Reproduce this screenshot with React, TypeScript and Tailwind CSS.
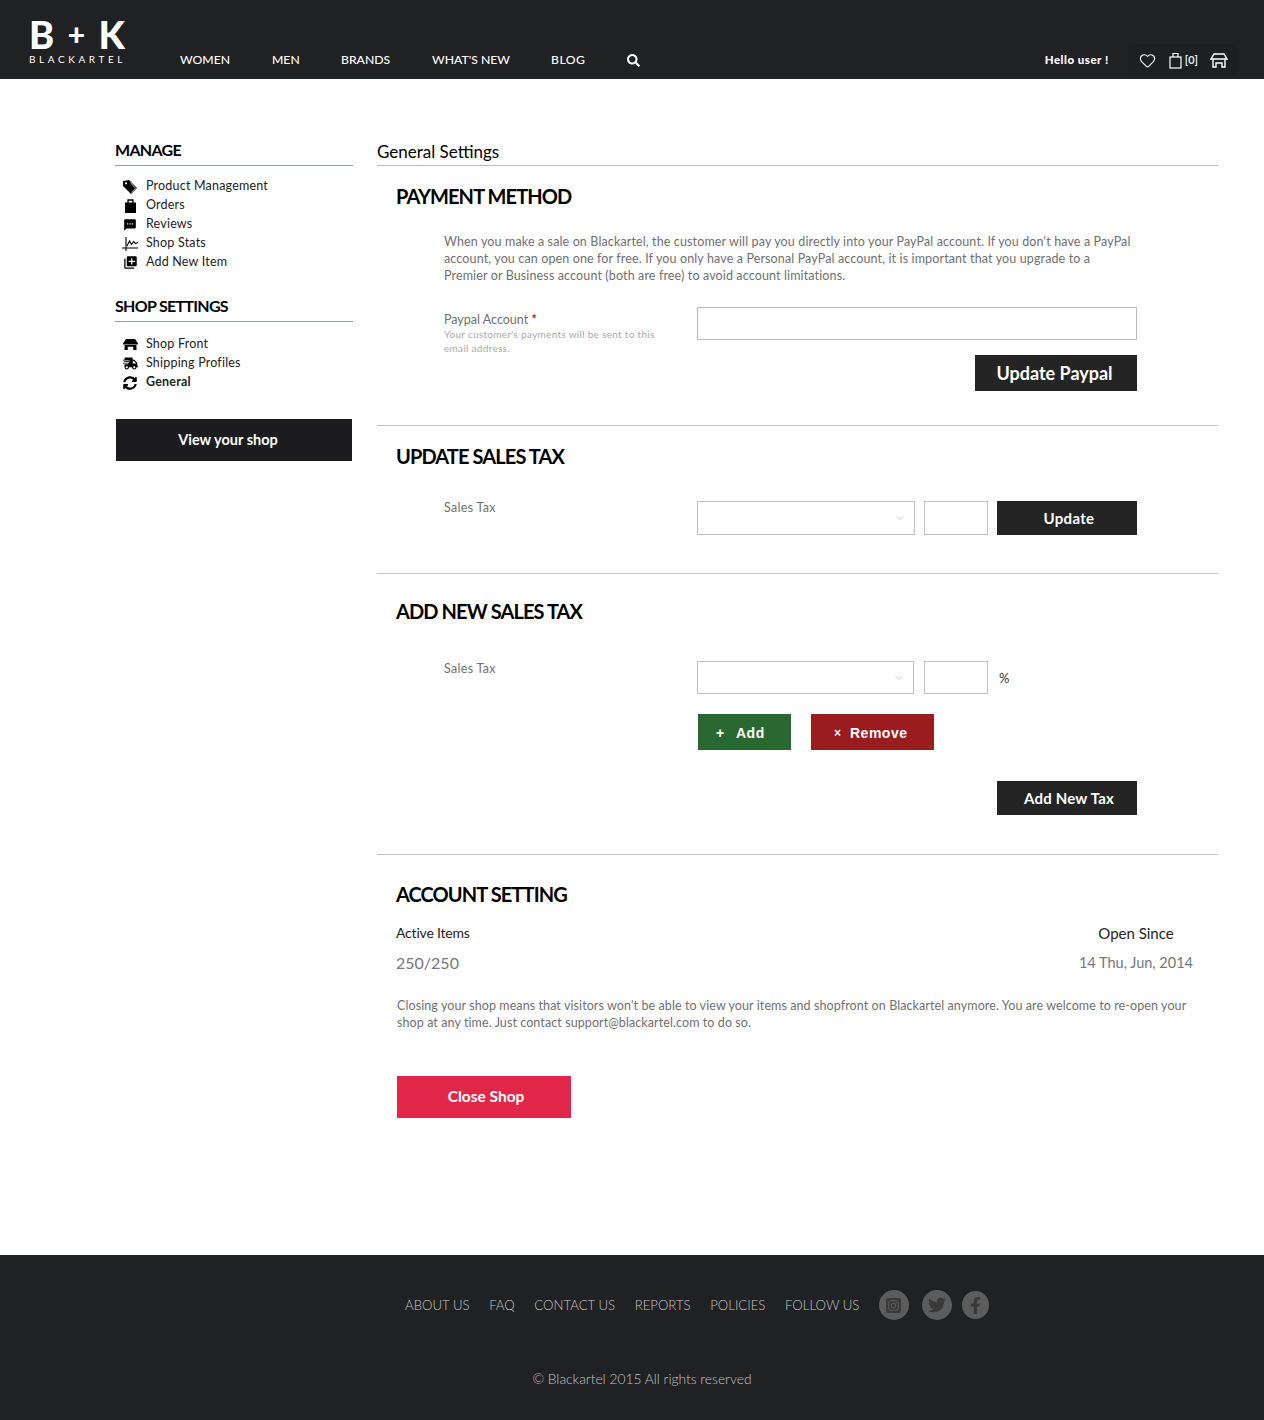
import React from "react";
import { FaShippingFast, FaSyncAlt, FaSearch, FaInstagramSquare, FaTwitter, FaFacebookF } from "react-icons/fa";
import { MdTextsms, MdLibraryAdd } from "react-icons/md";
import { Heart, ChevronDown } from "lucide-react";

const font = "font-['Lato','Liberation_Sans',sans-serif]";

function Stats() {
  return (
    <svg width="16" height="14" viewBox="0 0 16 14" fill="none" stroke="black" strokeWidth="1.1">
      <path d="M4 0v14M0 11h16" />
      <path d="M5 9l2.5-5 2 3.5 2-3 2 2 2.5-1" />
    </svg>
  );
}

function Tag() {
  return (
    <svg width="16" height="16" viewBox="0 0 16 16">
      <path fillRule="evenodd" fill="black" d="M1 2l6-1 8 8-6 6-8-8zM4 3.200a1.100 1.100 0 1 0 .01 0z" />
      <path d="M8.500 3.500l5 5.700L9.500 13.500" fill="none" stroke="white" strokeWidth="0.7" />
    </svg>
  );
}

function Bag() {
  return (
    <svg width="11" height="14" viewBox="0 0 11 14" fill="black">
      <path d="M0 3.500h11V14H0z" />
      <path d="M3 4V1h5v3" fill="none" stroke="black" strokeWidth="1.3" />
    </svg>
  );
}

function ShopFront() {
  return (
    <svg width="15" height="11" viewBox="0 0 16 12" fill="black">
      <path d="M3 0h10l3 4.500V6H0V4.500z" />
      <path d="M1.500 6.500h13V12H11V8.500H5V12H1.500z" />
    </svg>
  );
}

function SideItem({ icon, label, bold }: { icon: React.ReactNode; label: string; bold?: boolean }) {
  return (
    <div className="flex h-[19px] items-center">
      <div className="flex w-[31px] justify-center pr-[1px] text-black">{icon}</div>
      <span className={`text-[12.500px] tracking-[0.2px] text-[#222] ${bold ? "font-bold" : ""}`}>{label}</span>
    </div>
  );
}

function SideHead({ children }: { children: React.ReactNode }) {
  return <h3 className="h-[25px] border-b border-[#4ab8d6] text-[16px] leading-[18px] font-bold tracking-[-0.7px] text-black">{children}</h3>;
}

function SectionHead({ children }: { children: React.ReactNode }) {
  return <h2 className="text-[20px] leading-[26px] font-bold tracking-[-0.9px] text-black">{children}</h2>;
}

function Select({ w, h }: { w: string; h: string }) {
  return (
    <div className={`flex items-center justify-end border border-[#c0c0c0] bg-white pr-[8px] ${w} ${h}`}>
      <ChevronDown size={12} color="#aaa" strokeWidth={1.3} />
    </div>
  );
}

function DarkButton({ children, className }: { children: React.ReactNode; className: string }) {
  return <button className={`flex items-center justify-center bg-[#242424] font-bold text-white ${className}`}>{children}</button>;
}

const nav = [
  ["WOMEN", "w-[50px]"],
  ["MEN", "w-[27px]"],
  ["BRANDS", "w-[49px]"],
  ["WHAT'S NEW", "w-[77px]"],
  ["BLOG", "w-[35px] tracking-[0.5px]"],
];

export default function App() {
  return (
    <div className={`${font} bg-white`}>
      <header className="flex h-[79px] bg-[#1f2123] pl-[29px] pr-[26px] text-white">
        <div className="flex w-[96px] flex-col pt-[18px]">
          <div className="flex h-[33px] items-center justify-between text-[38px] leading-[33px] font-black">
            <span>B</span>
            <span className="text-[30px]">+</span>
            <span>K</span>
          </div>
          <div className="mt-[1px] text-[10px] leading-[14px] tracking-[3.6px] whitespace-nowrap">BLACKARTEL</div>
        </div>
        <nav className="ml-[55px] flex items-center gap-[42px] pt-[41px] text-[12.200px] font-medium">
          {nav.map(([n, w]) => (
            <a key={n} className={`whitespace-nowrap ${w}`}>{n}</a>
          ))}
          <FaSearch size={13} className="ml-[-1px]" />
        </nav>
        <div className="ml-auto flex items-center pt-[41px]">
          <span className="mr-[19px] text-[11.500px] font-black tracking-[0.5px]">Hello user !</span>
          <div className="flex h-[32px] items-center rounded-[6px] bg-[#1d1f21] pl-[11px] pr-[10px]">
            <Heart size={17} strokeWidth={1.6} />
            <svg className="ml-[13px]" width="13" height="17" viewBox="0 0 13 17" fill="none" stroke="white" strokeWidth="1.2">
              <rect x="1" y="5" width="11" height="11" />
              <path d="M4 5V1.500h5V5" />
            </svg>
            <span className="ml-[3px] text-[11px] font-bold text-[#dfe8f5]">[0]</span>
            <svg className="ml-[12px]" width="18" height="15" viewBox="0 0 18 15" fill="none" stroke="white" strokeWidth="1.4">
              <path d="M4 1h10l3 5H1z" />
              <path d="M3 6v8h3v-4h6v4h3V6" />
            </svg>
          </div>
        </div>
      </header>

      <div className="flex h-[1176px] pt-[62px] pl-[115px] pr-[46px]">
        <aside className="w-[238px] shrink-0">
          <SideHead>MANAGE</SideHead>
          <div className="pt-[11px]">
            <SideItem icon={<Tag />} label="Product Management" />
            <SideItem icon={<Bag />} label="Orders" />
            <SideItem icon={<MdTextsms size={14} />} label="Reviews" />
            <SideItem icon={<Stats />} label="Shop Stats" />
            <SideItem icon={<MdLibraryAdd size={15} />} label="Add New Item" />
          </div>
          <div className="mt-[25px]"><SideHead>SHOP SETTINGS</SideHead></div>
          <div className="pt-[13px]">
            <SideItem icon={<ShopFront />} label="Shop Front" />
            <SideItem icon={<FaShippingFast size={15} />} label="Shipping Profiles" />
            <SideItem icon={<FaSyncAlt size={14} />} label="General" bold />
          </div>
          <button className="mt-[27px] ml-[1px] flex h-[42px] w-[236px] items-center justify-center bg-[#1c1c1e] pr-[12px] text-[14.500px] font-bold text-white">View your shop</button>
        </aside>

        <main className="ml-[24px] flex-1">
          <h1 className="h-[25px] border-b border-[#bbb] text-[17px] leading-[22px] text-black">General Settings</h1>

          <section className="h-[260px] border-b border-[#c4c4c4] pt-[17px] pl-[19px] pr-[81px]">
            <SectionHead>PAYMENT METHOD</SectionHead>
            <div className="pl-[48px]">
              <p className="mt-[24px] pr-[4px] text-[12.500px] leading-[17px] tracking-[0.13px] text-[#707070]">
                When you make a sale on Blackartel, the customer will pay you directly into your PayPal account. If you don't have a PayPal account, you can open one for free. If you only have a Personal PayPal account, it is important that you upgrade to a Premier or Business account (both are free) to avoid account limitations.
              </p>
              <div className="mt-[23px] flex">
                <div className="w-[253px] pr-[40px] pt-[5px]">
                  <div className="text-[12.500px] leading-[15px] text-[#707070]">Paypal Account <span className="font-bold text-[#9b1c1f]">*</span></div>
                  <div className="text-[10px] leading-[14px] tracking-[0.3px] text-[#aaa]">Your customer's payments will be sent to this email address.</div>
                </div>
                <div className="flex flex-1 flex-col items-end">
                  <div className="h-[33px] w-full border border-[#bbb]"></div>
                  <DarkButton className="mt-[15px] h-[36px] w-[162px] pr-[3px] text-[18px]">Update Paypal</DarkButton>
                </div>
              </div>
            </div>
          </section>

          <section className="h-[148px] border-b border-[#c4c4c4] pt-[17px] pl-[19px] pr-[81px]">
            <SectionHead>UPDATE SALES TAX</SectionHead>
            <div className="mt-[32px] flex pl-[48px]">
              <div className="w-[253px] text-[12.500px] leading-[14px] tracking-[0.3px] text-[#707070]">Sales Tax</div>
              <Select w="w-[218px]" h="h-[34px]" />
              <div className="ml-[9px] h-[34px] w-[64px] border border-[#c0c0c0]"></div>
              <DarkButton className="ml-[9px] h-[34px] w-[140px] pl-[4px] text-[15px] tracking-[0.3px]">Update</DarkButton>
            </div>
          </section>

          <section className="h-[281px] border-b border-[#c4c4c4] pt-[24px] pl-[19px] pr-[81px]">
            <SectionHead>ADD NEW SALES TAX</SectionHead>
            <div className="mt-[37px] flex pl-[48px]">
              <div className="w-[253px] text-[12.500px] leading-[15px] tracking-[0.3px] text-[#707070]">Sales Tax</div>
              <div className="flex-1">
                <div className="flex items-center">
                  <Select w="w-[217px]" h="h-[33px]" />
                  <div className="ml-[10px] h-[33px] w-[64px] border border-[#c0c0c0]"></div>
                  <span className="ml-[11px] pt-[2px] text-[13px] text-[#333]">%</span>
                </div>
                <div className="mt-[20px] ml-[1px] flex gap-[20px] font-['Liberation_Sans',sans-serif] text-[14px] font-bold tracking-[0.5px] text-white">
                  <button className="flex h-[36px] w-[93px] items-center bg-[#2a6832] pl-[18px] pt-[2px]"><span className="w-[20px] text-left">+</span>Add</button>
                  <button className="flex h-[36px] w-[123px] items-center bg-[#9b1c1f] pl-[23px] pt-[2px]"><span className="w-[16px] text-left text-[12px]">×</span>Remove</button>
                </div>
                <div className="mt-[31px] flex justify-end">
                  <DarkButton className="h-[34px] w-[140px] pl-[4px] text-[15px] tracking-[0.2px]">Add New Tax</DarkButton>
                </div>
              </div>
            </div>
          </section>

          <section className="pt-[26px] pl-[19px] pr-[25px]">
            <SectionHead>ACCOUNT SETTING</SectionHead>
            <div className="mt-[16px] flex justify-between">
              <div>
                <div className="text-[14px] leading-[20px] tracking-[-0.2px] text-[#222]">Active Items</div>
                <div className="mt-[10px] text-[16px] leading-[20px] text-[#777]">250/250</div>
              </div>
              <div className="text-center">
                <div className="text-[15px] leading-[20px] text-[#222]">Open Since</div>
                <div className="mt-[10px] text-[14.500px] leading-[20px] text-[#777]">14 Thu, Jun, 2014</div>
              </div>
            </div>
            <p className="mt-[24px] ml-[1px] text-[12.500px] leading-[17px] tracking-[0.09px] text-[#707070]">
              Closing your shop means that visitors won't be able to view your items and shopfront on Blackartel anymore. You are welcome to re-open your shop at any time. Just contact support@blackartel.com to do so.
            </p>
            <button className="mt-[45px] ml-[1px] flex h-[42px] w-[174px] items-center justify-center bg-[#e2264a] pl-[4px] text-[15.500px] font-bold text-white">Close Shop</button>
          </section>
        </main>
      </div>

      <footer className="flex h-[165px] flex-col items-center bg-[#1f2123]">
        <div className="mt-[35px] ml-[130px] flex h-[30px] items-center text-[13.200px] font-light text-[#c4c4c4]">
          {["ABOUT US", "FAQ", "CONTACT US", "REPORTS", "POLICIES", "FOLLOW US"].map((t) => (
            <a key={t} className="mr-[19.600px] whitespace-nowrap pt-[1px]">{t}</a>
          ))}
          <div className="flex h-[30px] w-[30px] items-center justify-center rounded-full bg-[#5c5c5c] text-[#3a3a3a]"><FaInstagramSquare size={17} /></div>
          <div className="ml-[13px] flex h-[30px] w-[30px] items-center justify-center rounded-full bg-[#5c5c5c] text-[#3a3a3a]"><FaTwitter size={18} /></div>
          <div className="ml-[10px] flex h-[28px] w-[27px] items-center justify-center rounded-full bg-[#5c5c5c] text-[#3a3a3a]"><FaFacebookF size={17} /></div>
        </div>
        <div className="mt-[49px] ml-[20px] text-[13.800px] font-light text-[#c4c4c4]">© Blackartel 2015 All rights reserved</div>
      </footer>
    </div>
  );
}
